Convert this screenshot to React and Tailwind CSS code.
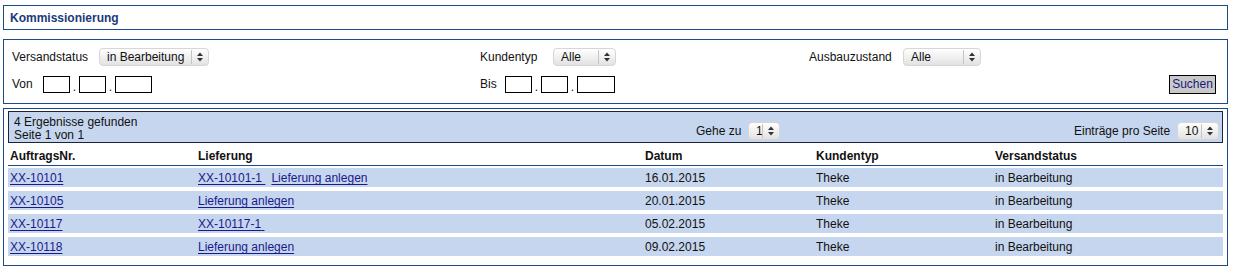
import React from 'react';

const font = { fontFamily: '"Liberation Sans", Arial, sans-serif' };

const Arrows = () => (
  <svg width="6" height="10" viewBox="0 0 6 10">
    <polygon points="0,4 3,0.5 6,4" fill="#333" />
    <polygon points="0,6 3,9.5 6,6" fill="#333" />
  </svg>
);

const Select = ({ value, className }) => (
  <div className={"flex h-[18px] items-center rounded-[4px] border border-[#d6d6d6] bg-linear-to-b from-white to-[#e2e2e2] text-[12px] text-[#111] " + className}>
    <span className="flex-1 truncate pl-[7px] leading-[16px]">{value}</span>
    <span className="h-[14px] w-px bg-[#c4c4c4]" />
    <span className="flex w-[16px] justify-center">
      <Arrows />
    </span>
  </div>
);

const DateInputs = ({ last }) => (
  <div className="flex items-end">
    <input className="h-[17px] w-[27px] border border-black bg-white" />
    <span className="w-[9px] text-center leading-[12px]">.</span>
    <input className="h-[17px] w-[27px] border border-black bg-white" />
    <span className="w-[9px] text-center leading-[12px]">.</span>
    <input className={"h-[17px] border border-black bg-white " + last} />
  </div>
);

const rows = [
  { nr: 'XX-10101', lief: 'XX-10101-1', anlegen: true, datum: '16.01.2015' },
  { nr: 'XX-10105', lief: null, anlegen: true, datum: '20.01.2015' },
  { nr: 'XX-10117', lief: 'XX-10117-1', anlegen: false, datum: '05.02.2015' },
  { nr: 'XX-10118', lief: null, anlegen: true, datum: '09.02.2015' },
];

const Link = ({ children }) => (
  <a href="#" className="text-[#1a1a8c] underline underline-offset-[2px]">{children}</a>
);

export default function App() {
  return (
    <div className="h-[274px] w-[1234px] bg-white pl-[3px] pt-[5px] text-[12px] text-[#111]" style={font}>
      {/* Titel */}
      <div className="flex h-[25px] w-[1225px] items-center border border-[#1a4a88] pl-[6px]">
        <span className="font-bold text-[#1b3b78]">Kommissionierung</span>
      </div>

      {/* Filter */}
      <div className="mt-[9px] h-[65px] w-[1225px] border border-[#1a4a88] pl-[8px] pr-[11px] pt-[8px]">
        <div className="flex h-[18px] items-center">
          <div className="flex w-[468px] items-center">
            <span className="w-[87px]">Versandstatus</span>
            <Select value="in Bearbeitung" className="w-[110px]" />
          </div>
          <div className="flex w-[329px] items-center">
            <span className="w-[73px]">Kundentyp</span>
            <Select value="Alle" className="w-[63px]" />
          </div>
          <div className="flex items-center">
            <span className="w-[94px]">Ausbauzustand</span>
            <Select value="Alle" className="w-[78px]" />
          </div>
        </div>
        <div className="mt-[9px] flex h-[18px] items-center">
          <div className="flex w-[468px] items-center">
            <span className="w-[31px]">Von</span>
            <DateInputs last="w-[37px]" />
          </div>
          <div className="flex w-[329px] items-center">
            <span className="w-[25px]">Bis</span>
            <DateInputs last="w-[38px]" />
          </div>
          <button className="ml-auto h-[19px] w-[47px] border border-black bg-[#c9c9c9] text-[12px] leading-[15px] text-[#1a1a7a]">
            Suchen
          </button>
        </div>
      </div>

      {/* Ergebnisse */}
      <div className="mt-[4px] h-[158px] w-[1225px] border border-[#1a4a88] px-[4px] pt-[2px]">
        <div className="flex h-[32px] border border-[#1c2438] bg-[#c6d6ee]">
          <div className="w-[687px] pl-[5px] pt-[4px] leading-[13px]">
            <div>4 Ergebnisse gefunden</div>
            <div>Seite 1 von 1</div>
          </div>
          <div className="flex items-center pt-[7px]">
            <span className="w-[52px]">Gehe zu</span>
            <Select value="1" className="w-[32px]" />
          </div>
          <div className="ml-auto flex items-center pr-[3px] pt-[7px]">
            <span className="w-[103px]">Einträge pro Seite</span>
            <Select value="10" className="w-[42px]" />
          </div>
        </div>

        <div className="grid grid-cols-[188px_447px_171px_179px_1fr] border-b border-[#1a4a88] pb-[2px] pl-[2px] pt-[6px] font-bold leading-[14px]">
          <span>AuftragsNr.</span>
          <span>Lieferung</span>
          <span>Datum</span>
          <span>Kundentyp</span>
          <span>Versandstatus</span>
        </div>

        <div className="mt-[2px] flex flex-col gap-[4px]">
          {rows.map((r) => (
            <div key={r.nr} className="grid h-[19px] grid-cols-[188px_447px_171px_179px_1fr] items-center bg-[#c6d6ee] pl-[2px] pt-[1px]">
              <span><Link>{r.nr}</Link></span>
              <span className="flex gap-[6px]">
                {r.lief && <Link>{r.lief}&nbsp;</Link>}
                {r.anlegen && <Link>Lieferung anlegen</Link>}
              </span>
              <span>{r.datum}</span>
              <span>Theke</span>
              <span>in Bearbeitung</span>
            </div>
          ))}
        </div>
      </div>
    </div>
  );
}
